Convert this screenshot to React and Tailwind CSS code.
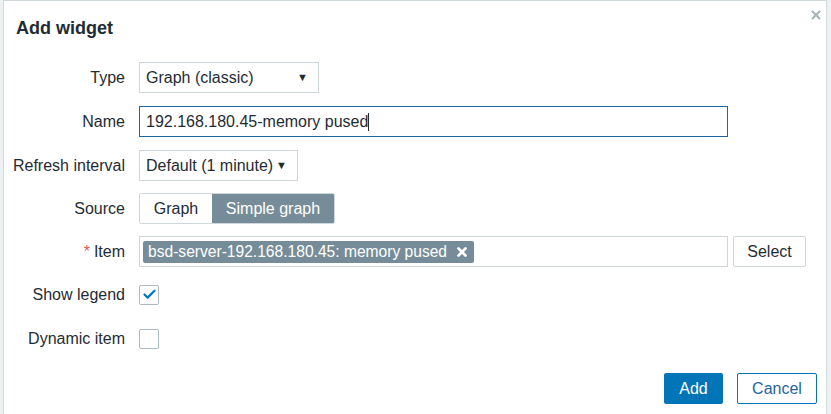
import { Check, X } from 'lucide-react'

function Row({ label, required, className = '', children }) {
  return (
    <div className={`flex items-center h-[31px] ${className}`}>
      <div className="w-[121px] shrink-0 text-right text-[#1f2c33]">
        {required && <span className="text-[#e45959] mr-1">*</span>}
        {label}
      </div>
      <div className="ml-[14px] flex items-center flex-1">{children}</div>
    </div>
  )
}

function Select({ value, width }) {
  return (
    <div
      className={`${width} h-[31px] border border-[#cfd7db] bg-white flex items-center justify-between pl-[6px] pr-[10px]`}
    >
      <span>{value}</span>
      <span className="text-[11px] text-[#1f2c33]">▼</span>
    </div>
  )
}

export default function App() {
  return (
    <div
      className="w-[831px] h-[414px] bg-[#eef1f2] overflow-hidden"
      style={{ fontFamily: '"Liberation Sans", Arial, sans-serif' }}
    >
      <div className="ml-[3px] w-[824px] h-[415px] bg-white border border-[#d3dadd] text-[16px] text-[#1f2c33]">
        {/* Header */}
        <div className="flex items-center justify-between h-[52px] pl-[12px] pr-[3px]">
          <h2 className="text-[18px] font-bold text-[#1f2c33] mt-[2px]">Add widget</h2>
          <button className="self-start mt-[7px] text-[#a8b3b8]">
            <X size={14} strokeWidth={3.5} />
          </button>
        </div>

        {/* Form */}
        <div className="flex flex-col gap-[12px] mt-[9px]">
          <Row label="Type">
            <Select value="Graph (classic)" width="w-[180px]" />
          </Row>

          <Row label="Name" className="mt-[1px]">
            <div className="w-[589px] h-[31px] border border-[#1f65a0] flex items-center pl-[6px]">
              <span>192.168.180.45-memory pused</span>
              <span className="w-px h-[18px] bg-[#1f2c33]" />
            </div>
          </Row>

          <Row label="Refresh interval" className="mt-[1px]">
            <Select value="Default (1 minute)" width="w-[159px]" />
          </Row>

          <Row label="Source">
            <div className="flex h-[31px] border border-[#cfd7db] rounded-[2px] overflow-hidden">
              <div className="w-[72px] flex items-center justify-center bg-white">Graph</div>
              <div className="w-[122px] flex items-center justify-center bg-[#768d99] text-white">
                Simple graph
              </div>
            </div>
          </Row>

          <Row label="Item" required>
            <div className="w-[589px] h-[31px] border border-[#cfd7db] flex items-center pl-[3px]">
              <div className="h-[22px] bg-[#768d99] text-white flex items-center pl-[5px] pr-[5px] rounded-[2px]">
                <span className="text-[15.6px]">bsd-server-192.168.180.45: memory pused</span>
                <X size={14} strokeWidth={4.5} className="ml-[8px]" />
              </div>
            </div>
            <button className="ml-[5px] w-[73px] h-[31px] border border-[#cfd7db] rounded-[2px] bg-white text-[#1f2c33]">
              Select
            </button>
          </Row>

          <Row label="Show legend">
            <div className="w-[20px] h-[20px] border border-[#acbbc2] rounded-[2px] flex items-center justify-center">
              <Check size={15} strokeWidth={3.5} className="text-[#0275b8]" />
            </div>
          </Row>

          <Row label="Dynamic item" className="mt-[1px]">
            <div className="w-[20px] h-[20px] border border-[#acbbc2] rounded-[2px]" />
          </Row>
        </div>

        {/* Footer */}
        <div className="flex justify-end gap-[14px] mt-[19px] pr-[9px]">
          <button className="w-[59px] h-[31px] bg-[#0275b8] text-white rounded-[2px]">Add</button>
          <button className="w-[80px] h-[31px] border border-[#0275b8] text-[#1f65a0] bg-white rounded-[2px]">
            Cancel
          </button>
        </div>
      </div>
    </div>
  )
}
